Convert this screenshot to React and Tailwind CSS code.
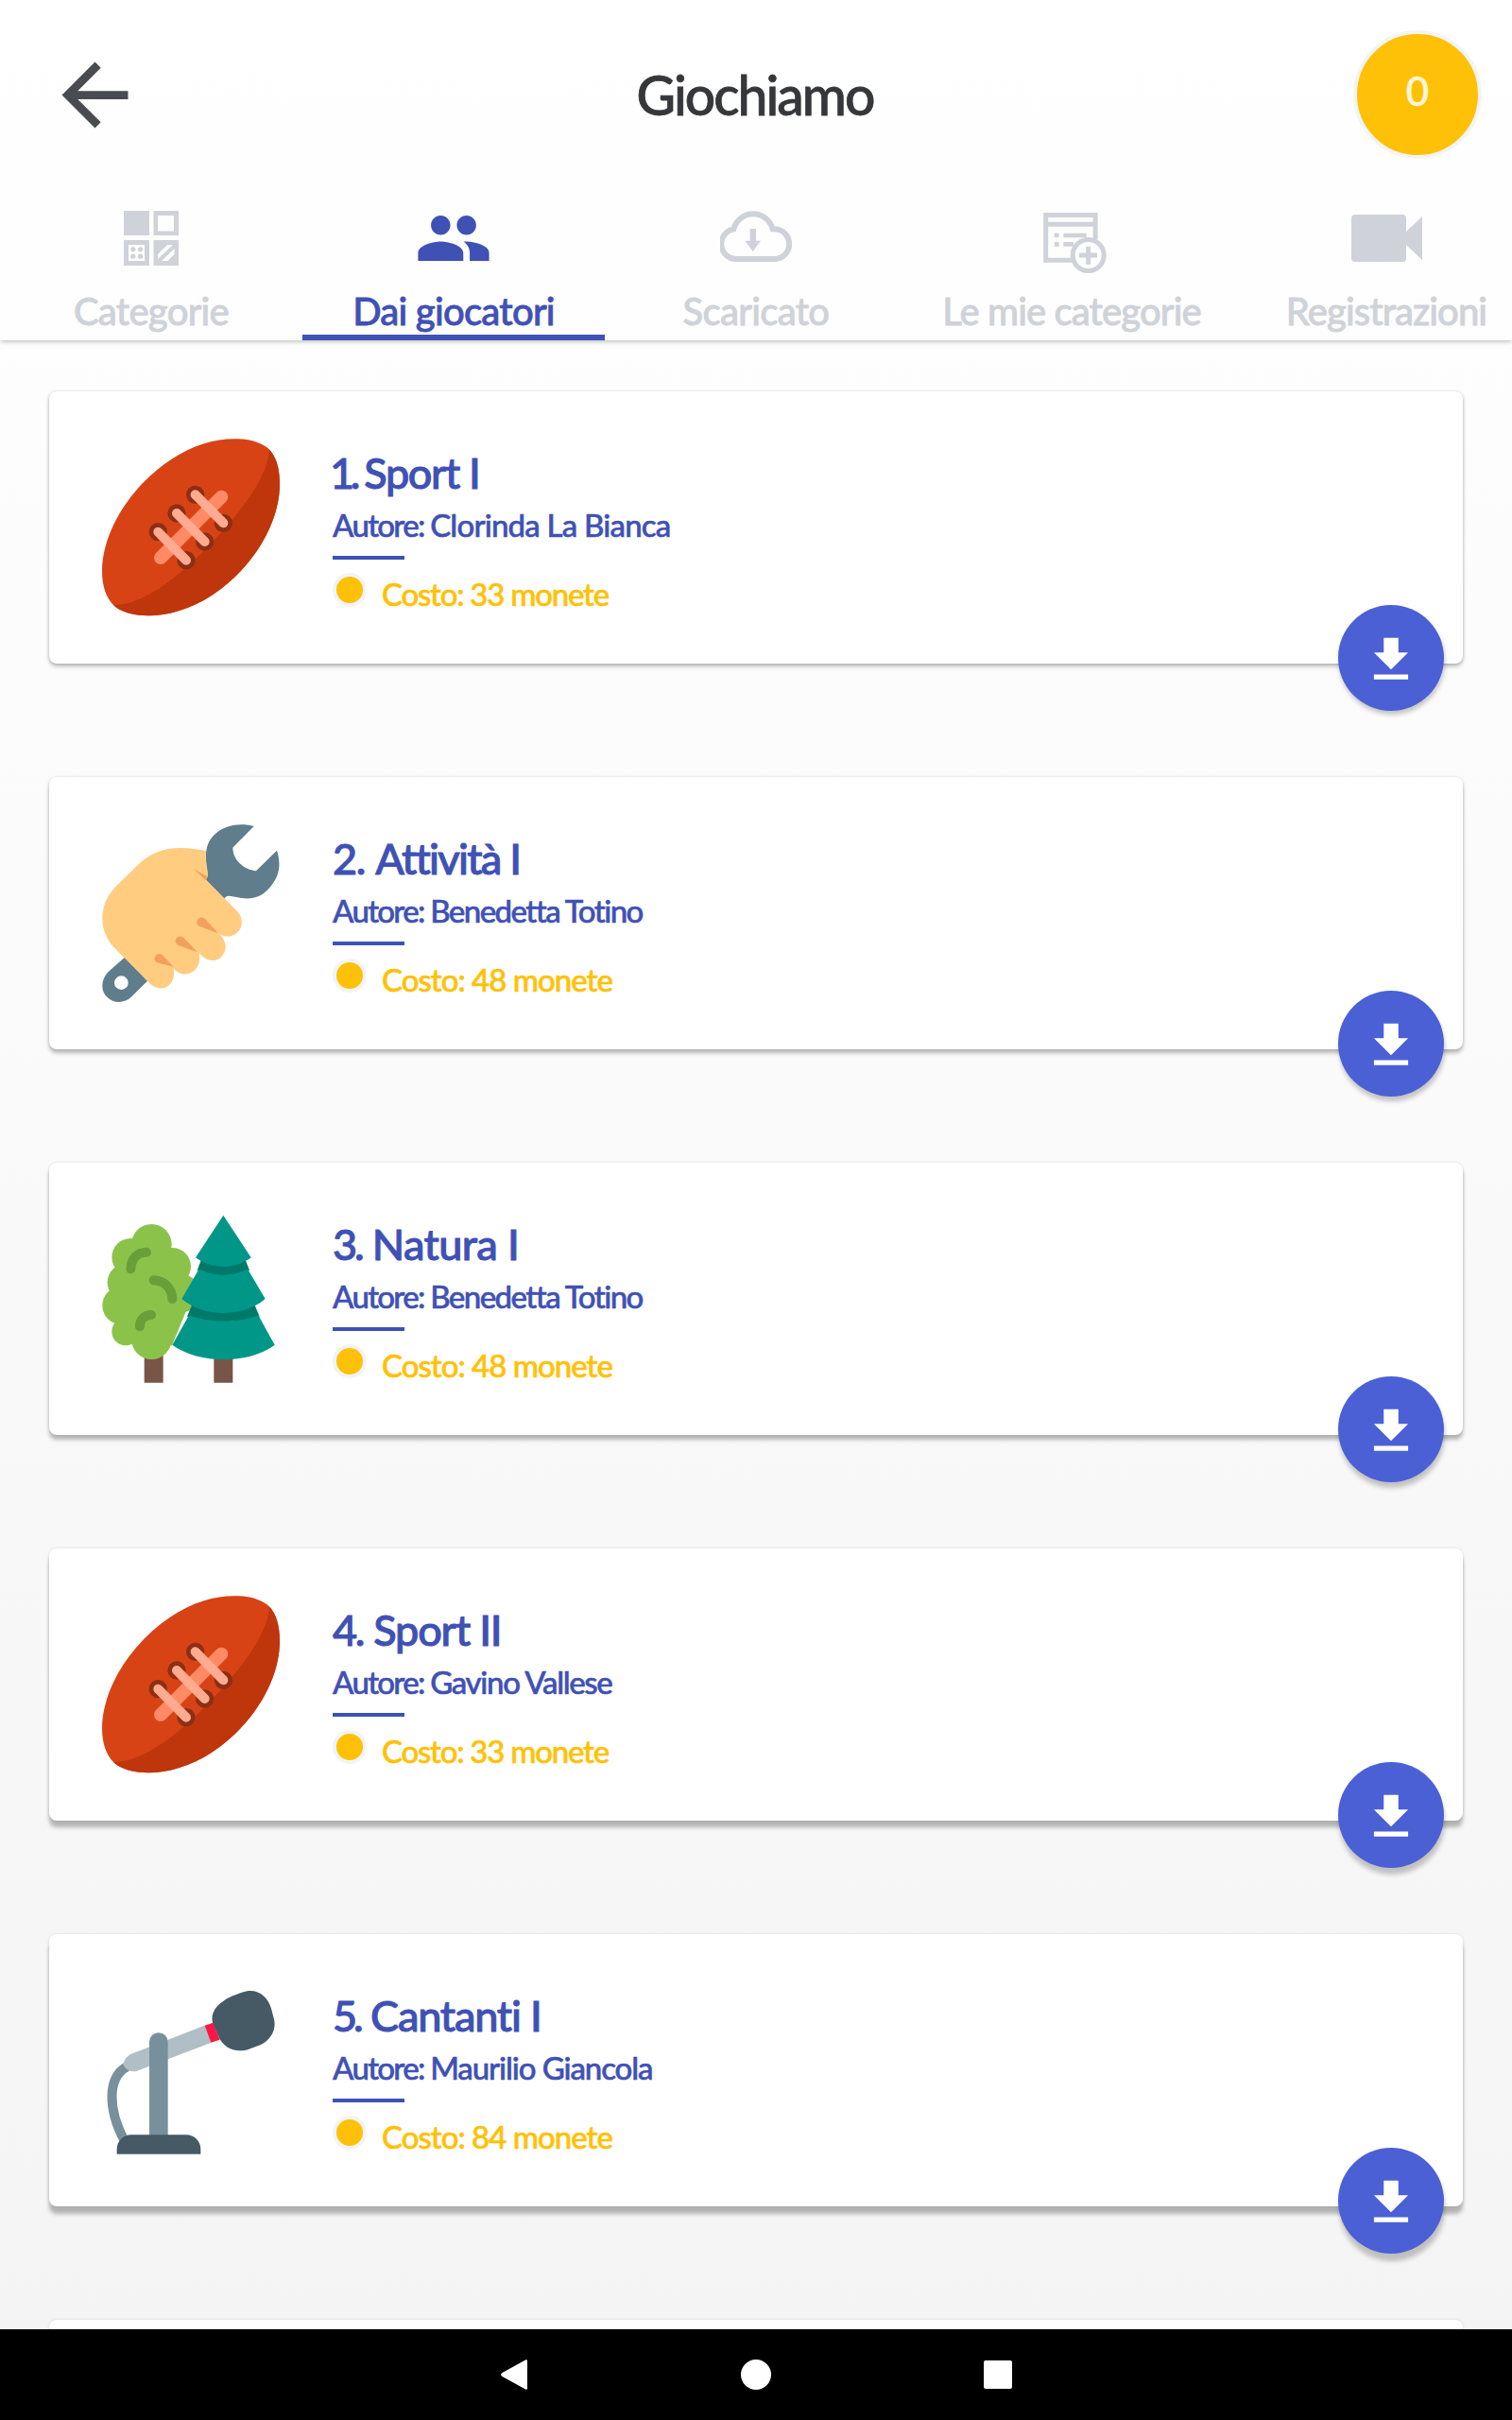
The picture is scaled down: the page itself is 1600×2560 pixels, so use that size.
const TABS = [
    { label: "Categorie", icon: GridIcon, width: "w-[320px]", tracking: "tracking-[-0.75px]" },
    { label: "Dai giocatori", icon: PeopleIcon, width: "w-[320px]", tracking: "tracking-[-0.75px]", active: true },
    { label: "Scaricato", icon: CloudIcon, width: "w-[320px]", tracking: "tracking-[-0.7px]" },
    { label: "Le mie categorie", icon: ListAddIcon, width: "w-[348px]", tracking: "tracking-[-0.9px]" },
    { label: "Registrazioni", icon: VideoIcon, width: "w-[318px]", tracking: "tracking-[-0.95px]" },
];

const CARDS = [
    {
        number: "1.", numberTracking: "-ml-[3px] mr-[-3px] tracking-[-4.4px]",
        title: "Sport I", titleTracking: "tracking-[-1.4px]",
        author: "Clorinda La Bianca", authorTracking: "tracking-[-0.8px]",
        cost: 33, costTracking: "tracking-[-1.25px]", art: Football,
        shadow: "shadow-[0_3px_4px_rgba(0,0,0,0.25),0_0_3px_rgba(0,0,0,0.16)]",
        fabShadow: "shadow-[1px_4px_5px_rgba(0,0,0,0.22)]",
    },
    {
        number: "2.", numberTracking: "tracking-[-1.4px]",
        title: "Attività I", titleTracking: "tracking-[-1.7px]",
        author: "Benedetta Totino", authorTracking: "tracking-[-1.55px]",
        cost: 48, costTracking: "tracking-[-1px]", art: Wrench,
        shadow: "shadow-[0_4px_4px_rgba(0,0,0,0.26),0_0_3px_rgba(0,0,0,0.14)]",
        fabShadow: "shadow-[1px_5px_5px_rgba(0,0,0,0.22)]",
    },
    {
        number: "3.", numberTracking: "tracking-[-3.2px]",
        title: "Natura I", titleTracking: "tracking-[-0.6px]",
        author: "Benedetta Totino", authorTracking: "tracking-[-1.55px]",
        cost: 48, costTracking: "tracking-[-1px]", art: Trees,
        shadow: "shadow-[0_5px_4px_rgba(0,0,0,0.27),0_0_3px_rgba(0,0,0,0.13)]",
        fabShadow: "shadow-[1px_6px_5px_rgba(0,0,0,0.22)]",
    },
    {
        number: "4.", numberTracking: "tracking-[-2.4px]",
        title: "Sport II", titleTracking: "tracking-[-1.2px]",
        author: "Gavino Vallese", authorTracking: "tracking-[-1.35px]",
        cost: 33, costTracking: "tracking-[-1.25px]", art: Football,
        shadow: "shadow-[0_7px_4px_rgba(0,0,0,0.27),0_0_3px_rgba(0,0,0,0.12)]",
        fabShadow: "shadow-[1px_7px_5px_rgba(0,0,0,0.22)]",
    },
    {
        number: "5.", numberTracking: "tracking-[-4px]",
        title: "Cantanti I", titleTracking: "tracking-[-1.2px]",
        author: "Maurilio Giancola", authorTracking: "tracking-[-1.1px]",
        cost: 84, costTracking: "tracking-[-1px]", art: Microphone,
        shadow: "shadow-[0_8px_4px_rgba(0,0,0,0.27),0_0_3px_rgba(0,0,0,0.12)]",
        fabShadow: "shadow-[1px_8px_5px_rgba(0,0,0,0.22)]",
    },
];

function GridIcon() {
    return (
        <svg viewBox="0 0 58 58" className="w-[58px] h-[58px]" fill="currentColor">
            <rect width="27" height="26" />
            <path fillRule="evenodd" d="M31.500 0H58v26H31.500zM36 5v16.500h17V5z" />
            <path fillRule="evenodd" d="M0 31h27v27H0zM5 36v17h17V36z" />
            <circle cx="9.800" cy="40.800" r="2.600" />
            <circle cx="17.500" cy="40.800" r="2.600" />
            <circle cx="9.800" cy="48.200" r="2.600" />
            <circle cx="17.500" cy="48.200" r="2.600" />
            <path fillRule="evenodd" d="M31.500 31H58v27H31.500zM36 46v5L52 36h-6zM40 53h6.500l7-7v-6z" />
        </svg>
    );
}

function PeopleIcon() {
    return (
        <svg viewBox="0 0 24 24" className="w-[82px] h-[82px]" fill="currentColor">
            <path d="M16 11c1.66 0 2.99-1.34 2.99-3S17.66 5 16 5c-1.66 0-3 1.34-3 3s1.34 3 3 3zm-8 0c1.66 0 2.99-1.34 2.99-3S9.66 5 8 5C6.34 5 5 6.34 5 8s1.34 3 3 3zm0 2c-2.33 0-7 1.17-7 3.5V19h14v-2.5c0-2.33-4.67-3.5-7-3.5zm8 0c-.29 0-.62.02-.97.05 1.16.84 1.97 1.97 1.97 3.45V19h6v-2.5c0-2.33-4.67-3.5-7-3.5z" />
        </svg>
    );
}

function CloudIcon() {
    return (
        <svg viewBox="36 39 228 162" className="w-[76px] h-[54px] mb-1" fill="none" stroke="currentColor" strokeWidth="18">
            <path d="M92 192h116a47.500 47.500 0 0 0 0-95h-5A64 64 0 0 0 79 97 48 48 0 0 0 92 192z" />
            <path d="M131 96h19v38h15l-25 34-25-34h16z" fill="currentColor" stroke="none" />
        </svg>
    );
}

function ListAddIcon() {
    return (
        <svg viewBox="28 30 201 192" className="w-[67px] h-[64px] ml-[7px] mt-[10px]" fill="none" stroke="currentColor" strokeWidth="15">
            <path d="M122 181H36V37.500h157.500V115M36 67h158" />
            <path d="M63 102h15M92 102h73M63 130h15M92 130h32" strokeWidth="14" />
            <circle cx="171" cy="165" r="49.500" />
            <path d="M142 165h57M171 137v57" />
        </svg>
    );
}

function VideoIcon() {
    return (
        <svg viewBox="0 0 75 50" className="w-[75px] h-[50px]" fill="currentColor">
            <path d="M4 0h50a4 4 0 0 1 4 4v14L75 2v46L58 32v14a4 4 0 0 1-4 4H4a4 4 0 0 1-4-4V4a4 4 0 0 1 4-4z" />
        </svg>
    );
}

function Football() {
    return (
        <svg viewBox="0 9 690 690" className="w-[230px] h-[230px] shrink-0">
            <path fill="#d84315" d="M584 106C540 62 400 50 270 140 140 228 55 370 54 492c0 50 14 86 36 108 45 45 185 55 315-32C535 480 618 340 618 215c0-50-12-87-34-109z" />
            <path fill="#bf360c" d="M584 106c22 22 34 59 34 109 0 125-83 265-213 353-130 87-270 77-315 32 90 2 200-82 300-185C490 310 585 190 584 106z" />
            <g fill="#8c2f14">
                <circle cx="350" cy="250" r="29" />
                <circle cx="291" cy="309" r="29" />
                <circle cx="232" cy="368" r="29" />
                <circle cx="439" cy="340" r="29" />
                <circle cx="380" cy="399" r="29" />
                <circle cx="321" cy="458" r="29" />
            </g>
            <path stroke="#ff8a65" strokeWidth="42" strokeLinecap="round" d="M240 450L433 257" />
            <path stroke="#ffab91" strokeWidth="30" strokeLinecap="round" d="M350 250l89 90M291 309l89 90M232 368l89 90" />
        </svg>
    );
}

function Wrench() {
    return (
        <svg viewBox="0 3 690 690" className="w-[230px] h-[230px] shrink-0">
            <path fill="#607d8b" fillRule="evenodd" d="M126 488l-52 46c-26 26-24 62-4 80 22 22 56 20 78-1l50-50zM115 547a22 22 0 1 1 0 44 22 22 0 0 1 0-44z" />
            <path fill="#607d8b" d="M536 72C500 62 450 64 415 95c-36 30-35 70-26 130l-5 18 58 59c8-15 20-8 50-3 34 6 64 2 94-32 34-37 36-78 23-118l-66 65c-40-4-74-36-74-74z" />
            <path fill="#ffcc80" d="M384 150c-70-14-150-20-214 43l-72 70c-55 55-60 140 0 200l104 104c20 24 50 24 66 8 14-14 18-34 12-52 20 24 50 24 68 6 16-16 18-38 13-58 18 30 52 34 70 17 20-20 22-46-4-74 22 14 44 7 56-4 20-20 18-50 0-68L384 242c8-10 6-20 4-34-5-24-5-38-4-58z" />
            <g fill="#f2a15d">
                <path d="M344 208l44 24-4 12z" />
                <path d="M422 412l-58-22a15 15 0 1 1 17-24z" />
                <path d="M357 472l-61-22a15 15 0 1 1 17-24z" />
                <path d="M281 518l-54-14a15 15 0 1 1 18-24z" />
            </g>
        </svg>
    );
}

function Trees() {
    return (
        <svg viewBox="0 -3 690 690" className="w-[230px] h-[230px] shrink-0">
            <path fill="#795548" d="M188 510h60v98h-60zM409 510h60v98h-60z" />
            <g fill="#8bc34a">
                <circle cx="211" cy="169" r="64" />
                <circle cx="145" cy="210" r="60" />
                <circle cx="277" cy="239" r="59" />
                <circle cx="131" cy="290" r="60" />
                <circle cx="115" cy="363" r="60" />
                <circle cx="129" cy="446" r="44" />
                <circle cx="211" cy="470" r="64" />
                <circle cx="306" cy="325" r="60" />
                <path d="M130 200h150l70 110-74 180-140-10z" />
            </g>
            <path fill="none" stroke="#689f38" strokeWidth="30" strokeLinecap="round" d="M145 247c2-34 22-53 50-53M218 283c38 2 57 28 59 59M174 430c0-22 14-37 36-37" />
            <path fill="#00796b" d="M370 215h138l14 36c-60 22-110 22-166 0zM340 360h198l16 38c-80 22-150 22-230 0z" />
            <path fill="#009688" d="M439 77l88 134c-50 38-126 38-176 0zM362 247c46 26 110 26 154 0l56 95c-70 60-194 60-265 0zM330 394c60 25 160 25 220 0l52 94c-84 62-238 62-325 0z" />
        </svg>
    );
}

function Microphone() {
    return (
        <svg viewBox="0 -15 690 690" className="w-[230px] h-[230px] shrink-0">
            <path fill="none" stroke="#78909c" strokeWidth="30" d="M134 318c-66 36-60 138-10 234" />
            <path fill="#b0bec5" d="M383 187l18 55-236 90c-18 6-36-4-44-20 2-14 10-26 26-34z" />
            <path fill="#ff1744" d="M380 188l26-9 22 54-28 9z" />
            <path fill="#455a64" d="M438 112c16-16 42-22 60-29 46-16 82 10 94 54l8 32c8 34-12 66-42 80l-38 14c-40 14-82-2-98-44l-14-32c-12-26 0-56 30-75z" />
            <path fill="#78909c" d="M204 240a29 29 0 0 1 59 0v300h-59z" />
            <path fill="#455a64" d="M101 596v-15c0-26 20-46 46-46h174c26 0 46 20 46 46v15z" />
        </svg>
    );
}

function DownloadButton({ shadow }) {
    return (
        <button className={`absolute right-[20px] -bottom-[50px] w-[112px] h-[112px] rounded-full bg-[#4b60d5] text-white flex items-center justify-center ${shadow}`}>
            <svg viewBox="0 0 24 24" className="w-[62px] h-[62px] mt-1" fill="currentColor">
                <path d="M19 9h-4V3H9v6H5l7 7 7-7zM5 18v2h14v-2H5z" />
            </svg>
        </button>
    );
}

function Card({ number, numberTracking, title, titleTracking, author, authorTracking, cost, costTracking, art: Art, shadow, fabShadow }) {
    return (
        <div className={`relative h-[288px] shrink-0 rounded-lg bg-white pl-[38px] flex items-center ${shadow}`}>
            <Art />
            <div className="ml-8 h-full flex flex-col items-start text-[#3f51b5] font-medium whitespace-nowrap">
                <h2 className="mt-[56px] h-[60px] leading-[60px] text-[45px] [-webkit-text-stroke:1px_currentColor]">
                    <span className={numberTracking}>{number}</span>{" "}
                    <span className={titleTracking}>{title}</span>
                </h2>
                <p className="h-[50px] leading-[50px] text-[33px] [-webkit-text-stroke:0.6px_currentColor]">
                    <span className="tracking-[-1.7px]">Autore: </span>
                    <span className={authorTracking}>{author}</span>
                </p>
                <div className="mt-2 w-[76px] h-1 bg-[#3f51b5]"></div>
                <div className="mt-[14px] flex text-[#ffc107]">
                    <div className="w-9 h-9 rounded-full border-4 border-[#f4f4f4] bg-[#ffc107]"></div>
                    <p className={`ml-4 mt-1 leading-[36px] text-[33px] [-webkit-text-stroke:0.6px_currentColor] ${costTracking}`}>Costo: {cost} monete</p>
                </div>
            </div>
            <DownloadButton shadow={fabShadow} />
        </div>
    );
}

export default function App() {
    return (
        <div className="w-[1600px] h-[2560px] flex flex-col overflow-hidden font-['Lato',sans-serif] bg-gradient-to-b from-white to-[#f4f4f4]">
            <header className="h-[200px] shrink-0 px-8 flex items-center justify-between">
                <div className="w-[136px] flex">
                    <svg viewBox="0 0 24 24" className="w-[105px] h-[105px] ml-4" fill="#484b4f">
                        <path d="M20 11H7.830l5.590-5.590L12 4l-8 8 8 8 1.410-1.410L7.830 13H20v-2z" />
                    </svg>
                </div>
                <h1 className="pt-[2px] pr-[2px] text-[57px] font-medium tracking-[-2px] text-[#36373b] [-webkit-text-stroke:0.8px_currentColor]">Giochiamo</h1>
                <div className="w-[136px] h-[136px] rounded-full border-4 border-[#f4f4f4] bg-[#ffc107] text-[#fff6d8] text-[42px] font-medium flex items-center justify-center pb-2 [-webkit-text-stroke:0.6px_currentColor]">0</div>
            </header>

            <nav className="h-[160px] shrink-0 flex shadow-[0_3px_4px_-1px_rgba(0,0,0,0.22)]">
                {TABS.map(({ label, icon: Icon, width, tracking, active }) => (
                    <div key={label} className={`shrink-0 flex flex-col items-center border-b-6 ${width} ${active ? "text-[#3f51b5] border-[#3f51b5]" : "text-[#cfd2d9] border-transparent"}`}>
                        <div className="mt-[10px] h-[84px] flex items-center">
                            <Icon />
                        </div>
                        <span className={`mt-[10px] leading-[50px] text-[40px] font-medium whitespace-nowrap [-webkit-text-stroke:0.8px_currentColor] ${tracking}`}>{label}</span>
                    </div>
                ))}
            </nav>

            <main className="grow min-h-0 overflow-hidden px-[52px] pt-[54px] flex flex-col gap-[120px]">
                {CARDS.map((card) => (
                    <Card key={card.number} {...card} />
                ))}
                <div className="h-[288px] shrink-0 rounded-lg bg-white shadow-[0_0_3px_rgba(0,0,0,0.16)]"></div>
            </main>

            <footer className="h-24 shrink-0 bg-black flex items-center justify-center gap-[226px] pl-px">
                <svg viewBox="0 0 28 32" className="w-7 h-8" fill="white">
                    <path d="M26.500.2Q28 0 28 1.500v29q0 1.500-1.500 1.300L1.500 18q-3-2 0-4z" />
                </svg>
                <div className="w-8 h-8 rounded-full bg-white"></div>
                <div className="-ml-px w-[30px] h-[30px] rounded-[2px] bg-white"></div>
            </footer>
        </div>
    );
}
